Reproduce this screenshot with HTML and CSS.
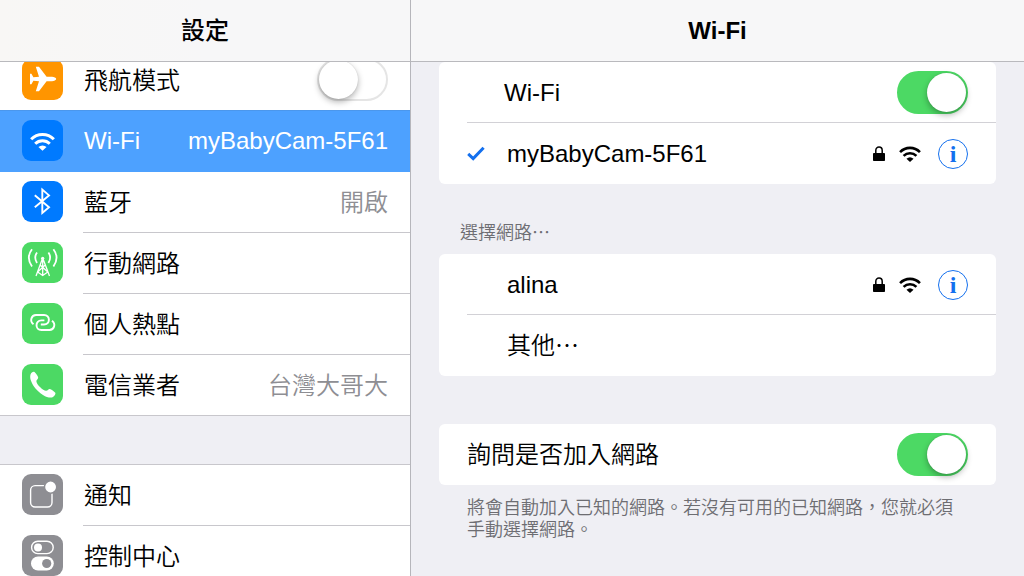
FILE: index.html
```html
<!DOCTYPE html>
<html lang="zh-Hant">
<head>
<meta charset="UTF-8">
<meta name="viewport" content="width=device-width, initial-scale=1.0">
<title>設定</title>
<link rel="stylesheet" href="styles.css">
</head>
<body>
    <!-- 共用圖示 -->
    <svg class="defs" aria-hidden="true">
        <symbol id="wifi" viewBox="0 0 26 19">
            <path d="M1.2 7.2A16.5 16.5 0 0 1 24.8 7.2M5.4 11.8A10.8 10.8 0 0 1 20.6 11.8" fill="none" stroke="currentColor" stroke-width="3.1"/>
            <path d="M13 19L8.8 15.2A6.2 6.2 0 0 1 17.2 15.2Z" fill="currentColor"/>
        </symbol>
        <symbol id="lock" viewBox="0 0 12 15">
            <path d="M2.8 8V4.4a3.2 3.4 0 0 1 6.4 0V8" fill="none" stroke="currentColor" stroke-width="1.5"/>
            <rect y="7" width="12" height="8" rx="0.8" fill="currentColor"/>
        </symbol>
    </svg>

    <div class="settings">
        <aside class="sidebar">
            <header class="bar bar-left"><h1>設定</h1></header>
            <nav class="menu">
                <div class="group">
                    <div class="item no-line">
                        <svg class="icon orange" viewBox="0 0 41 41"><path fill="#fff" d="M34.2 20C34.2 21.2 32 22.2 30 22.2H24.6L17 32.2H13.8L17 22.2L11.4 21.8L9.4 25.2H8V14.8H9.4L11.4 18.2L17 17.8L13.8 7.8H17L24.6 17.8H30C32 17.8 34.2 18.8 34.2 20Z"/></svg>
                        <div class="item-body">
                            <label for="airplane">飛航模式</label>
                            <input class="switch" type="checkbox" id="airplane">
                        </div>
                    </div>
                    <a class="item selected" href="#wifi-panel">
                        <svg class="icon blue" viewBox="0 0 41 41"><use href="#wifi" x="8" y="12" width="25" height="19"/></svg>
                        <span class="item-body"><span>Wi-Fi</span><span class="value">myBabyCam-5F61</span></span>
                    </a>
                    <a class="item" href="#">
                        <svg class="icon blue" viewBox="0 0 41 41"><path d="M12.8 14.3L27 26.2L20.3 32V8.6L27 14.4L12.8 26.2" fill="none" stroke="#fff" stroke-width="1.9"/></svg>
                        <span class="item-body"><span>藍牙</span><span class="value">開啟</span></span>
                    </a>
                    <a class="item" href="#">
                        <svg class="icon green" viewBox="0 0 41 41">
                            <path d="M20.7 16L14 34M20.7 16L27.5 34M20.7 16V34M18.2 23L25.8 30M23.2 23L15.6 30M15.6 30L20.7 33.5L25.8 30" fill="none" stroke="#fff" stroke-width="1.3"/>
                            <circle cx="20.7" cy="16.3" r="1.6" fill="#fff"/>
                            <path d="M15 10.5Q11.5 15.5 15 21M26.4 10.5Q29.9 15.5 26.4 21M10 7.2Q3.7 15.5 10 24.5M31.4 7.2Q37.7 15.5 31.4 24.5" fill="none" stroke="#fff" stroke-width="1.8"/>
                        </svg>
                        <span class="item-body"><span>行動網路</span></span>
                    </a>
                    <a class="item" href="#">
                        <svg class="icon green" viewBox="0 0 41 41"><path d="M11.5 21.3C7.2 17.8 9.5 12 14 12H22C28.5 12 28.5 21.5 22 21.5H18.8M30 17.7C34.3 21.2 32 27 27.5 27H19.4C12.9 27 12.9 17.4 19.4 17.4H22.4" fill="none" stroke="#fff" stroke-width="1.9"/></svg>
                        <span class="item-body"><span>個人熱點</span></span>
                    </a>
                    <a class="item" href="#">
                        <svg class="icon green" viewBox="0 0 41 41"><path fill="#fff" d="M9 9.5C10 8 11.5 7.2 12.5 8C14 9.3 16 12 16.2 13.5C16.4 15 14.2 15.8 14.4 17.5C15 21 21 26.5 24 26.8C25.7 27 26.3 24.7 27.8 24.9C29.3 25.2 32.2 27.3 33.3 28.8C34 30 32.5 32 31 33C29 34.2 25 33.6 21 31C15 27.2 10.5 21.5 8.7 16C8 13.5 8 11 9 9.5Z"/></svg>
                        <span class="item-body"><span>電信業者</span><span class="value">台灣大哥大</span></span>
                    </a>
                </div>
                <div class="group">
                    <a class="item" href="#">
                        <svg class="icon gray" viewBox="0 0 41 41">
                            <rect x="8.6" y="11.6" width="21.4" height="21.4" rx="4.5" fill="none" stroke="#fff" stroke-width="1.4"/>
                            <circle cx="28.6" cy="13" r="6.2" fill="#fff" stroke="#8e8e93" stroke-width="1.6"/>
                        </svg>
                        <span class="item-body"><span>通知</span></span>
                    </a>
                    <a class="item" href="#">
                        <svg class="icon gray" viewBox="0 0 41 41">
                            <rect x="9.6" y="6.2" width="21.6" height="12.4" rx="6.2" fill="none" stroke="#fff" stroke-width="1.4"/>
                            <circle cx="16" cy="12.4" r="4" fill="#fff"/>
                            <rect x="9" y="21.5" width="22.8" height="14" rx="7" fill="#fff"/>
                            <circle cx="24.7" cy="28.5" r="4.6" fill="#8e8e93"/>
                        </svg>
                        <span class="item-body"><span>控制中心</span></span>
                    </a>
                </div>
            </nav>
        </aside>

        <main class="panel" id="wifi-panel">
            <header class="bar"><h2>Wi-Fi</h2></header>
            <div class="content">
                <section class="card">
                    <div class="row">
                        <label class="indent" for="wifi-on">Wi-Fi</label>
                        <input class="switch" type="checkbox" id="wifi-on" checked>
                    </div>
                    <div class="row">
                        <svg class="check" viewBox="0 0 18 15"><path d="M1.2 7.8L6.2 12.6L16.6 1.8" fill="none" stroke="#1470ee" stroke-width="3"/></svg>
                        <span class="name">myBabyCam-5F61</span>
                        <svg class="lock"><use href="#lock"/></svg>
                        <svg class="signal"><use href="#wifi"/></svg>
                        <button class="info" type="button">i</button>
                    </div>
                </section>

                <h3 class="label">選擇網路…</h3>
                <section class="card">
                    <div class="row">
                        <span class="check"></span>
                        <span class="name">alina</span>
                        <svg class="lock"><use href="#lock"/></svg>
                        <svg class="signal"><use href="#wifi"/></svg>
                        <button class="info" type="button">i</button>
                    </div>
                    <div class="row">
                        <span class="check"></span>
                        <span class="name">其他⋯</span>
                    </div>
                </section>

                <section class="card card-ask">
                    <div class="row">
                        <label for="ask">詢問是否加入網路</label>
                        <input class="switch" type="checkbox" id="ask" checked>
                    </div>
                </section>
                <p class="note">將會自動加入已知的網路。若沒有可用的已知網路，您就必須手動選擇網路。</p>
            </div>
        </main>
    </div>
</body>
</html>
```
FILE: styles.css
```css
* {
    box-sizing: border-box;
}
body {
    margin: 0;
    font-family: "Liberation Sans", "Noto Sans CJK TC", sans-serif;
    font-size: 24px;
    font-weight: 350;
    line-height: 32px;
    color: #000;
    background: #efeff4;
}
h1, h2, h3, p {
    margin: 0;
}
.defs {
    position: absolute;
    width: 0;
    height: 0;
}

/* 左右兩欄 */
.settings {
    display: grid;
    grid-template-columns: 411px 1fr;
    height: 100vh;
}
.sidebar, .panel {
    min-width: 0;
    overflow: hidden;
}
.sidebar {
    border-right: 1px solid #b6b6bb;
}

/* 標題列 */
.bar {
    position: relative;
    z-index: 1;
    display: flex;
    align-items: center;
    justify-content: center;
    height: 62px;
    background: #f7f7f8;
    border-bottom: 1px solid #b9b9bd;
}
.bar-left {
    background: linear-gradient(to right, #f8f7f5, #f7f7f8 50%);
}
.bar h1, .bar h2 {
    font-size: 24px;
    font-weight: 500;
}
.bar h2 {
    font-weight: 700;
}

/* 左側選單，第一列捲到標題列下方 */
.menu {
    display: flex;
    flex-direction: column;
    gap: 48px;
    margin-top: -13px;
}
.group {
    background: #fff;
    border-top: 1px solid #c8c7cc;
}
.item {
    display: flex;
    align-items: center;
    gap: 20px;
    height: 61px;
    padding-left: 22px;
    color: inherit;
    text-decoration: none;
}
.item:last-child {
    border-bottom: 1px solid #c8c7cc;
}
.item-body {
    flex: 1;
    display: flex;
    align-items: center;
    justify-content: space-between;
    height: 61px;
    padding: 2px 22px 0 1px;
    border-bottom: 1px solid #c8c7cc;
}
.item:last-child .item-body, .no-line .item-body {
    border-bottom-color: transparent;
}
.value {
    color: #8e8e93;
}
.selected {
    background: #4da1ff;
    box-shadow: 0 -1px 0 #4b97ec;
}
.selected, .selected .value {
    color: #fff;
}
.selected .item-body {
    padding-top: 0;
    border-bottom-color: transparent;
}
.icon {
    width: 41px;
    height: 41px;
    margin-bottom: 2px;
    border-radius: 9px;
    color: #fff;
}
.orange {
    background: #ff9500;
}
.blue {
    background: #007aff;
}
.green {
    background: #4cd964;
}
.gray {
    background: #8e8e93;
}

/* 開關 */
.switch {
    appearance: none;
    flex: none;
    position: relative;
    width: 71px;
    height: 43px;
    margin: 0;
    border: 2px solid #e5e5e5;
    border-radius: 22px;
    background: #fff;
}
.switch::before {
    content: "";
    position: absolute;
    top: 0;
    left: 0;
    width: 39px;
    height: 39px;
    border-radius: 50%;
    background: #fff;
    box-shadow: 0 3px 6px rgba(0, 0, 0, 0.3), 0 0 1px rgba(0, 0, 0, 0.2);
}
.switch:checked {
    background: #4cd964;
    border-color: #4cd964;
}
.switch:checked::before {
    left: auto;
    right: 0;
}
.item .switch {
    margin-bottom: 4px;
}

/* 右側內容 */
.content {
    padding: 0 28px;
}
.card {
    background: #fff;
    border-radius: 6px;
}
.row {
    position: relative;
    display: flex;
    align-items: center;
    height: 61px;
    padding: 0 28px;
}
.row + .row::before {
    content: "";
    position: absolute;
    top: -1px;
    left: 28px;
    right: 0;
    height: 1px;
    background: #d2d1d6;
}
.row .switch {
    margin-left: auto;
}
.indent {
    padding-left: 37px;
}
.check {
    width: 18px;
    height: 15px;
    margin-right: 22px;
}
.name {
    flex: 1;
}
.lock {
    width: 12px;
    height: 15px;
    margin-right: 14px;
}
.signal {
    width: 22px;
    height: 16px;
    margin-right: 17px;
}
.info {
    width: 30px;
    height: 30px;
    padding: 0;
    border: 1px solid #1470ee;
    border-radius: 50%;
    background: none;
    color: #1470ee;
    font-family: "Liberation Serif", serif;
    font-size: 24px;
    font-weight: 700;
    line-height: 28px;
}
.label, .note {
    font-family: "Noto Sans CJK TC", sans-serif;
    font-size: 18px;
    font-weight: 350;
    color: #6d6d72;
}
.label {
    padding: 34px 21px 10px;
    line-height: 26px;
}
.card-ask {
    margin-top: 48px;
}
.note {
    padding: 10px 28px;
    line-height: 22px;
}
```
